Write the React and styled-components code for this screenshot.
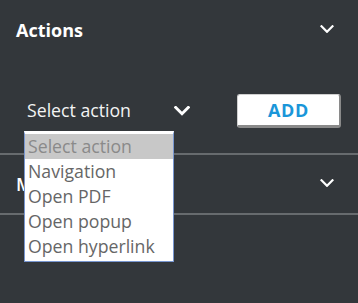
import React, { useState } from "react";
import styled, { createGlobalStyle } from "styled-components";

const GlobalStyle = createGlobalStyle`
	html, body {
		margin: 0;
		padding: 0;
		background: #33373b;
	}
	body {
		font-family: "Open Sans", "Liberation Sans", sans-serif;
	}
`;

const options = ["Select action", "Navigation", "Open PDF", "Open popup", "Open hyperlink"];

function Chevron({ size = 14, weight = 2.2 }) {
	return (
		<svg width={size} height={size * 0.6} viewBox="0 0 14 8.4" fill="none">
			<path
				d="M1.5 1.3 L7 6.8 L12.5 1.3"
				stroke="#fff"
				strokeWidth={weight}
				strokeLinecap="square"
			/>
		</svg>
	);
}

function App() {
	const [selected] = useState(0);

	return (
		<>
			<GlobalStyle />
			<Panel>
				<SectionHeader>
					<Title>Actions</Title>
					<Chevron />
				</SectionHeader>
				<SectionBody>
					<SelectWrap>
						<SelectControl>
							<SelectText>Select action</SelectText>
							<Chevron size={16} weight={2.6} />
						</SelectControl>
						<OptionList>
							{options.map((opt, i) => (
								<Option key={opt} $active={i === selected}>
									{opt}
								</Option>
							))}
						</OptionList>
					</SelectWrap>
					<AddButton>ADD</AddButton>
				</SectionBody>
				<Divider />
				<SectionHeader $short>
					<Title $light>More</Title>
					<Chevron />
				</SectionHeader>
				<Divider />
			</Panel>
		</>
	);
}

export default App;

const Panel = styled.div`
	width: 358px;
	height: 303px;
	background: #33373b;
	display: flex;
	flex-direction: column;
`;

const SectionHeader = styled.div`
	height: ${(p) => (p.$short ? "58px" : "60px")};
	display: flex;
	align-items: center;
	justify-content: space-between;
	padding: 0 24px 0 16px;
	box-sizing: border-box;
	svg {
		margin-top: -2px;
	}
`;

const Title = styled.div`
	color: #fff;
	font-size: 18px;
	font-weight: ${(p) => (p.$light ? 600 : 700)};
`;

const SectionBody = styled.div`
	display: flex;
	align-items: center;
	padding: 34px 0 25px 24px;
`;

const SelectWrap = styled.div`
	position: relative;
	width: 166px;
`;

const SelectControl = styled.div`
	height: 34px;
	display: flex;
	align-items: center;
	justify-content: space-between;
	padding-left: 3px;
	color: #f4f4f4;
	font-size: 17.7px;
`;

const SelectText = styled.span`
	line-height: 1;
`;

const OptionList = styled.div`
	position: absolute;
	top: 37px;
	left: 0;
	width: 150px;
	box-sizing: border-box;
	background: #fff;
	border: 1px solid #7896d0;
	border-top: 3px solid #fff;
	padding-bottom: 2px;
	z-index: 10;
`;

const Option = styled.div`
	height: 25px;
	line-height: 25px;
	padding-left: 3px;
	font-size: 17.7px;
	color: ${(p) => (p.$active ? "#8a8a8a" : "#666")};
	background: ${(p) => (p.$active ? "#c8c8c8" : "transparent")};
	white-space: nowrap;
`;

const AddButton = styled.button`
	margin-left: 47px;
	width: 104px;
	height: 34px;
	box-sizing: border-box;
	background: #fff;
	border: 1px solid #cfcfcf;
	border-right: 2px solid #8a8a8a;
	border-bottom: 3px solid #8a8a8a;
	border-radius: 3px;
	color: #1a96d9;
	font-family: "Open Sans", "Liberation Sans", sans-serif;
	font-weight: 700;
	font-size: 18px;
	letter-spacing: 0.6px;
	padding: 0;
`;

const Divider = styled.div`
	height: 2px;
	background: #676b6e;
`;
